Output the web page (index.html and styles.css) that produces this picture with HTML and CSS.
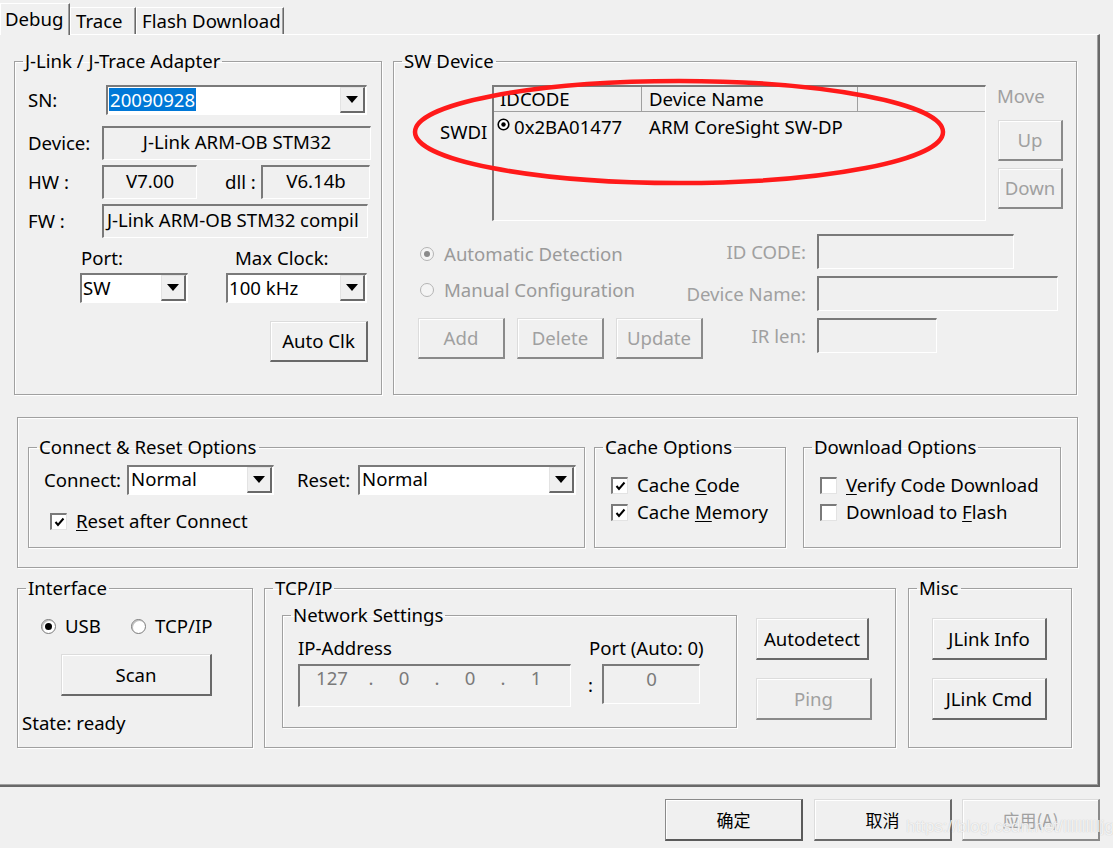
FILE: index.html
```html
<!DOCTYPE html>
<html>
<head>
<meta charset="utf-8">
<title>J-Link Settings</title>
<link rel="stylesheet" href="styles.css">
</head>
<body>
<div class="tabs">
  <div class="tab active">Debug</div>
  <div class="tab t2">Trace</div>
  <div class="tab t3">Flash Download</div>
</div>
<div class="page">
  <div class="row1">
    <fieldset class="grp adapter">
      <legend>J-Link / J-Trace Adapter</legend>
      <div class="arow r-sn">
        <span class="lbl l-sn">SN:</span>
        <div class="combo c-sn"><span class="cval"><span class="sel">20090928</span></span><span class="ddb"><svg width="12" height="7" viewBox="0 0 12 7"><path d="M0 0H12L6 7Z" fill="#000"/></svg></span></div>
      </div>
      <div class="arow r-dev">
        <span class="lbl l-a">Device:</span>
        <div class="stat s-dev">J-Link ARM-OB STM32</div>
      </div>
      <div class="arow r-hw">
        <span class="lbl l-a">HW :</span>
        <div class="stat s-hw">V7.00</div>
        <span class="lbl l-dll">dll :</span>
        <div class="stat s-dll">V6.14b</div>
      </div>
      <div class="arow r-fw">
        <span class="lbl l-a">FW :</span>
        <div class="stat s-fw">J-Link ARM-OB STM32 compil</div>
      </div>
      <div class="ports">
        <div class="pcol p1">
          <div class="plbl">Port:</div>
          <div class="combo c-port"><span class="cval">SW</span><span class="ddb"><svg width="12" height="7" viewBox="0 0 12 7"><path d="M0 0H12L6 7Z" fill="#000"/></svg></span></div>
        </div>
        <div class="pcol p2">
          <div class="plbl">Max Clock:</div>
          <div class="combo c-clk"><span class="cval">100 kHz</span><span class="ddb"><svg width="12" height="7" viewBox="0 0 12 7"><path d="M0 0H12L6 7Z" fill="#000"/></svg></span></div>
        </div>
      </div>
      <div class="btn b-autoclk">Auto Clk</div>
    </fieldset>

    <fieldset class="grp swdev">
      <legend>SW Device</legend>
      <div class="swtop">
        <div class="swdi">SWDI</div>
        <div class="list">
          <div class="lhead">
            <div class="hc hc1">IDCODE</div>
            <div class="hc hc2">Device Name</div>
            <div class="hc hc3"></div>
          </div>
          <div class="lrow">
            <span class="lc1"><svg class="rowicon" width="13" height="13" viewBox="0 0 13 13"><circle cx="6.5" cy="6.5" r="5.3" fill="#fff" stroke="#000" stroke-width="1.6"/><circle cx="6.5" cy="6.5" r="2.2" fill="#000"/></svg>0x2BA01477</span>
            <span class="lc2">ARM CoreSight SW-DP</span>
          </div>
        </div>
        <div class="move">
          <div class="mlbl">Move</div>
          <div class="btn dis b-up">Up</div>
          <div class="btn dis b-down">Down</div>
        </div>
      </div>
      <div class="swbot">
        <div class="swleft">
          <div class="radio dis on r-auto"><span class="rc"></span>Automatic Detection</div>
          <div class="radio dis r-man"><span class="rc"></span>Manual Configuration</div>
          <div class="btnrow">
            <div class="btn dis b-sm">Add</div>
            <div class="btn dis b-sm">Delete</div>
            <div class="btn dis b-sm">Update</div>
          </div>
        </div>
        <div class="swgrid">
          <span class="glbl">ID CODE:</span><div class="fld f-id"></div>
          <span class="glbl">Device Name:</span><div class="fld f-name"></div>
          <span class="glbl">IR len:</span><div class="fld f-ir"></div>
        </div>
      </div>
    </fieldset>
  </div>

  <div class="opts">
    <fieldset class="grp cr">
      <legend>Connect &amp; Reset Options</legend>
      <div class="crrow">
        <span class="lbl l-conn">Connect:</span>
        <div class="combo c-conn"><span class="cval">Normal</span><span class="ddb"><svg width="12" height="7" viewBox="0 0 12 7"><path d="M0 0H12L6 7Z" fill="#000"/></svg></span></div>
        <span class="lbl l-reset">Reset:</span>
        <div class="combo c-reset"><span class="cval">Normal</span><span class="ddb"><svg width="12" height="7" viewBox="0 0 12 7"><path d="M0 0H12L6 7Z" fill="#000"/></svg></span></div>
      </div>
      <div class="check cr-check"><span class="cb on"><svg width="11" height="10" viewBox="0 0 11 10"><path d="M1.5 5 L4 8 L9.5 1.5" fill="none" stroke="#000" stroke-width="2"/></svg></span><span><u>R</u>eset after Connect</span></div>
    </fieldset>
    <fieldset class="grp cache">
      <legend>Cache Options</legend>
      <div class="check ck1"><span class="cb on"><svg width="11" height="10" viewBox="0 0 11 10"><path d="M1.5 5 L4 8 L9.5 1.5" fill="none" stroke="#000" stroke-width="2"/></svg></span><span>Cache <u>C</u>ode</span></div>
      <div class="check ck2"><span class="cb on"><svg width="11" height="10" viewBox="0 0 11 10"><path d="M1.5 5 L4 8 L9.5 1.5" fill="none" stroke="#000" stroke-width="2"/></svg></span><span>Cache <u>M</u>emory</span></div>
    </fieldset>
    <fieldset class="grp dl">
      <legend>Download Options</legend>
      <div class="check ck1"><span class="cb"></span><span><u>V</u>erify Code Download</span></div>
      <div class="check ck2"><span class="cb"></span><span>Download to <u>F</u>lash</span></div>
    </fieldset>
  </div>

  <div class="row3">
    <fieldset class="grp iface">
      <legend>Interface</legend>
      <div class="iradios">
        <div class="radio on r-usb"><span class="rc"></span>USB</div>
        <div class="radio r-tcp"><span class="rc"></span>TCP/IP</div>
      </div>
      <div class="btn b-scan">Scan</div>
      <div class="state">State: ready</div>
    </fieldset>
    <fieldset class="grp tcp">
      <legend>TCP/IP</legend>
      <div class="tcpwrap">
        <fieldset class="grp net">
          <legend>Network Settings</legend>
          <div class="netrow">
            <div class="ipcol">
              <div class="nlbl">IP-Address</div>
              <div class="fld ipfld"><span class="oct o1">127</span><span class="dot">.</span><span class="oct">0</span><span class="dot">.</span><span class="oct">0</span><span class="dot">.</span><span class="oct">1</span></div>
            </div>
            <div class="portcol">
              <div class="nlbl">Port (Auto: 0)</div>
              <div class="portrow"><span class="colon">:</span><div class="fld portfld">0</div></div>
            </div>
          </div>
        </fieldset>
        <div class="tcpbtns">
          <div class="btn b-auto">Autodetect</div>
          <div class="btn dis b-ping">Ping</div>
        </div>
      </div>
    </fieldset>
    <fieldset class="grp misc">
      <legend>Misc</legend>
      <div class="btn b-misc">JLink Info</div>
      <div class="btn b-misc b-cmd">JLink Cmd</div>
    </fieldset>
  </div>
</div>
<div class="footer">
  <div class="btn fbtn def">确定</div>
  <div class="btn fbtn">取消</div>
  <div class="btn fbtn dis">应用(A)</div>
  <span class="watermark">https://blog.csdn.net/lllllllllljg</span>
</div>
<svg class="circle-mark" width="560" height="120" viewBox="0 0 560 120"><ellipse cx="280" cy="60" rx="264" ry="51" fill="none" stroke="#ff1a1a" stroke-width="4.5"/></svg>
</body>
</html>
```
FILE: styles.css
```css
* { box-sizing: border-box; }
body {
  margin: 0;
  width: 1113px;
  height: 848px;
  overflow: hidden;
  position: relative;
  background: #f0f0f0;
  font-family: "Noto Sans", "Open Sans", "Noto Sans CJK SC", sans-serif;
  font-size: 18.6px;
  line-height: 22px;
  color: #000;
}
u { text-decoration: underline; text-underline-offset: 2px; }

/* tabs */
.tabs { display: flex; align-items: flex-end; height: 34px; }
.tab {
  height: 27px;
  border-top: 1px solid #fff;
  border-left: 1px solid #fff;
  border-right: 1px solid #696969;
  box-shadow: inset -1px 0 #a0a0a0;
  padding-left: 5px;
  line-height: 25px;
  white-space: nowrap;
}
.tab.active {
  position: relative;
  z-index: 2;
  height: 32px;
  margin-bottom: -1px;
  width: 70px;
  background: #f0f0f0;
  line-height: 30px;
  padding-left: 4px;
}
.t2 { width: 66px; }
.t3 { width: 148px; }

.page {
  width: 1100px;
  height: 753px;
  border-top: 1px solid #fff;
  border-right: 2px solid #696969;
  border-bottom: 2px solid #696969;
  box-shadow: inset -1px -1px #a0a0a0;
}

/* group boxes */
.grp {
  margin: 0;
  padding: 0;
  min-width: 0;
  border: 1px solid #a0a0a0;
  box-shadow: 1px 1px 0 #fff, inset 1px 1px 0 #fff;
}
.grp > legend {
  margin-left: 8px;
  padding: 0 2px;
  height: 24px;
  line-height: 24px;
  white-space: nowrap;
}

.lbl { display: inline-block; flex: none; white-space: nowrap; }

/* sunken static */
.stat, .fld {
  border-style: solid;
  border-width: 2px 1px 1px 2px;
  border-color: #7a7a7a #fff #fff #7a7a7a;
  background: #f0f0f0;
  flex: none;
}
.stat {
  height: 34px;
  text-align: center;
  line-height: 28px;
  white-space: nowrap;
  overflow: hidden;
}

/* combo */
.combo {
  display: flex;
  height: 30px;
  background: #fff;
  border-style: solid;
  border-width: 2px 1px 1px 2px;
  border-color: #7a7a7a #fff #fff #7a7a7a;
  flex: none;
}
.cval { flex: 1; padding-left: 1px; line-height: 26px; white-space: nowrap; overflow: hidden; }
.sel { background: #0078d7; color: #fff; display: inline-block; line-height: 23px; padding: 0 1px; margin-top: 1px; }
.ddb {
  width: 25px;
  height: 26px;
  margin-right: 1px;
  background: #f0f0f0;
  border-style: solid;
  border-width: 1px 2px 2px 1px;
  border-color: #e3e3e3 #696969 #696969 #e3e3e3;
  display: flex;
  align-items: center;
  justify-content: center;
  flex: none;
}

/* button */
.btn {
  display: flex;
  align-items: center;
  justify-content: center;
  background: #f0f0f0;
  border-style: solid;
  border-width: 1px 2px 2px 1px;
  border-color: #dcdcdc #696969 #696969 #dcdcdc;
  box-shadow: inset 1px 1px #fff;
  white-space: nowrap;
  flex: none;
}
.btn.dis { color: #a0a0a0; border-color: #dcdcdc #8a8a8a #8a8a8a #dcdcdc; }
.btn.def { border-color: #8a8a8a #5a5a5a #5a5a5a #8a8a8a; }

/* radio & check */
.radio { display: flex; align-items: center; height: 22px; white-space: nowrap; }
.rc {
  width: 15px; height: 15px;
  border-radius: 50%;
  border: 1px solid #7a7a7a;
  background: #fff;
  box-shadow: inset 1px 1px #c0c0c0;
  margin-right: 9px;
  position: relative;
  flex: none;
}
.radio.on .rc::after {
  content: "";
  position: absolute;
  left: 3px; top: 3px;
  width: 7px; height: 7px;
  border-radius: 50%;
  background: #000;
}
.radio.dis { color: #9a9a9a; }
.radio.dis .rc { border-color: #b4b4b4; background: #f4f4f4; box-shadow: none; width: 14px; height: 14px; margin-left: 2px; margin-right: 10px; }
.radio.dis.on .rc::after { background: #8a8a8a; left: 3px; top: 3px; width: 6px; height: 6px; }

.check { display: flex; align-items: center; height: 22px; white-space: nowrap; }
.cb {
  width: 17px; height: 17px;
  background: #fff;
  border-style: solid;
  border-width: 2px 1px 1px 2px;
  border-color: #7a7a7a #e3e3e3 #e3e3e3 #7a7a7a;
  display: flex;
  align-items: center;
  justify-content: center;
  flex: none;
  margin-right: 9px;
}

/* row 1 */
.row1 { display: flex; margin-top: 14px; }
.adapter { margin-left: 14px; width: 368px; height: 346px; }
.arow { display: flex; align-items: center; padding-left: 13px; }
.r-sn { margin-top: 12px; height: 30px; }
.l-sn { width: 78px; }
.c-sn { width: 261px; }
.r-dev { margin-top: 11px; }
.l-a { width: 74px; }
.s-dev { width: 269px; }
.r-hw { margin-top: 5px; }
.s-hw { width: 95px; }
.l-dll { width: 36px; margin-left: 28px; }
.s-dll { width: 109px; }
.r-fw { margin-top: 5px; }
.s-fw { width: 266px; text-align: left; padding-left: 3px; }
.ports { display: flex; margin-top: 9px; }
.pcol { display: flex; flex-direction: column; }
.p1 { margin-left: 65px; width: 108px; }
.p2 { margin-left: 38px; width: 141px; }
.p1 .plbl { padding-left: 1px; }
.p2 .plbl { padding-left: 9px; }
.plbl { height: 22px; white-space: nowrap; }
.pcol .combo { margin-top: 4px; width: 100%; }
.b-autoclk { margin-top: 18px; margin-left: 255px; width: 98px; height: 41px; }

.swdev { margin-left: 11px; width: 684px; height: 346px; }
.swtop { display: flex; margin-top: 12px; }
.swdi { width: 52px; margin-left: 46px; padding-top: 36px; flex: none; }
.list {
  width: 494px;
  height: 136px;
  border-style: solid;
  border-width: 2px 1px 1px 2px;
  border-color: #7a7a7a #fff #fff #7a7a7a;
  flex: none;
}
.lhead { display: flex; height: 25px; border-bottom: 1px solid #a0a0a0; }
.hc { height: 24px; line-height: 24px; border-right: 1px solid #a0a0a0; white-space: nowrap; }
.hc1 { width: 148px; padding-left: 6px; }
.hc2 { width: 216px; padding-left: 7px; }
.hc3 { flex: 1; border-right: none; }
.lrow { display: flex; height: 30px; align-items: flex-start; white-space: nowrap; }
.lc1 { width: 148px; padding-left: 3px; display: flex; align-items: flex-start; padding-top: 4px; }
.rowicon { flex: none; margin-top: 2px; margin-right: 4px; }
.lc2 { padding-left: 7px; padding-top: 4px; }
.move { margin-left: 11px; width: 66px; display: flex; flex-direction: column; }
.mlbl { color: #a0a0a0; height: 22px; }
.b-up { margin-top: 13px; margin-left: 1px; width: 65px; height: 41px; }
.b-down { margin-top: 7px; margin-left: 1px; width: 65px; height: 41px; }

.swbot { display: flex; margin-top: 13px; }
.swleft { margin-left: 24px; width: 265px; flex: none; }
.r-auto { margin-top: 9px; }
.r-man { margin-top: 14px; }
.btnrow { display: flex; gap: 12px; margin-top: 17px; }
.b-sm { width: 87px; height: 41px; }
.swgrid {
  display: grid;
  grid-template-columns: 123px auto;
  column-gap: 11px;
  row-gap: 7px;
  grid-auto-rows: 35px;
  align-items: center;
}
.glbl { text-align: right; color: #a0a0a0; white-space: nowrap; }
.fld { height: 35px; }
.f-id { width: 197px; }
.f-name { width: 241px; }
.f-ir { width: 120px; }

/* row 2 */
.opts {
  display: flex;
  margin-top: 22px;
  margin-left: 17px;
  width: 1061px;
  height: 151px;
  border: 1px solid #a0a0a0;
  box-shadow: 1px 1px 0 #fff, inset 1px 1px 0 #fff;
  padding: 17px 0 0 10px;
}
.cr { width: 557px; height: 113px; }
.cache { margin-left: 9px; width: 192px; height: 113px; }
.dl { margin-left: 17px; width: 258px; height: 113px; }
.crrow { display: flex; align-items: center; margin-top: 6px; padding-left: 15px; height: 30px; }
.l-conn { width: 83px; }
.c-conn { width: 147px; }
.l-reset { margin-left: 23px; width: 61px; }
.c-reset { width: 218px; }
.c-conn .cval, .c-reset .cval { padding-left: 2px; line-height: 24px; }
.cr-check { margin-top: 15px; padding-left: 21px; }
.cache .check, .dl .check { padding-left: 16px; }
.ck1 { margin-top: 15px; }
.ck2 { margin-top: 5px; }

/* row 3 */
.row3 { display: flex; margin-top: 8px; margin-left: 17px; }
.iface { width: 236px; height: 172px; }
.iradios { display: flex; margin-top: 15px; padding-left: 23px; }
.r-usb { width: 90px; }
.b-scan { margin-top: 17px; margin-left: 43px; width: 151px; height: 42px; }
.state { margin-top: 16px; padding-left: 4px; }
.tcp { margin-left: 11px; width: 632px; height: 172px; }
.tcpwrap { display: flex; }
.net { margin-top: 3px; margin-left: 17px; width: 455px; height: 125px; }
.netrow { display: flex; padding-left: 15px; }
.nlbl { margin-top: 10px; height: 22px; white-space: nowrap; }
.ipfld {
  margin-top: 5px;
  width: 273px;
  height: 43px;
  display: flex;
  align-items: flex-start;
  color: #7a7a7a;
  padding-top: 1px;
}
.oct { width: 20px; text-align: center; }
.o1 { width: 32px; margin-left: 16px; }
.ipfld .dot { width: 14px; text-align: center; margin: 0 16px; }
.portcol { margin-left: 17px; }
.portcol .nlbl { padding-left: 1px; }
.portrow { display: flex; margin-top: 5px; }
.colon { width: 14px; line-height: 34px; padding-top: 4px; }
.portfld { width: 98px; height: 40px; text-align: center; color: #7a7a7a; line-height: 26px; }
.tcpbtns { margin-left: 19px; }
.b-auto { margin-top: 18px; width: 113px; height: 42px; }
.b-ping { margin-top: 18px; width: 116px; height: 42px; }
.misc { margin-left: 12px; width: 164px; height: 172px; }
.b-misc { margin-top: 18px; margin-left: 23px; width: 115px; height: 42px; }

/* footer */
.footer { position: relative; display: flex; margin-top: 12px; padding-left: 665px; gap: 11px; }
.fbtn { width: 138px; height: 42px; font-family: "Noto Sans CJK SC", sans-serif; font-size: 17px; }
.fbtn.dis { margin-left: -1px; }
.watermark {
  position: absolute;
  left: 906px;
  top: 17px;
  font-family: "Liberation Sans", sans-serif;
  font-size: 17px;
  color: rgba(255, 255, 255, 0.8);
  text-shadow: 0 0 1px rgba(150, 150, 150, 0.6);
  white-space: nowrap;
}

.circle-mark { position: absolute; left: 399px; top: 72px; }
```
